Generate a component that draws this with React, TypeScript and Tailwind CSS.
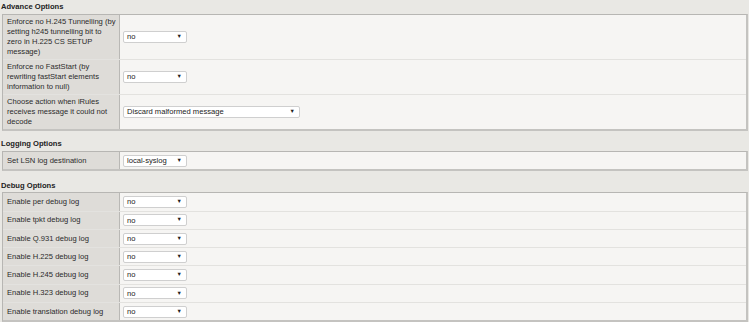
import React from "react";

const font = { fontFamily: '"Liberation Sans", Arial, sans-serif' };

function Select({ value, wide }: { value: string; wide?: boolean }) {
  return (
    <div
      className={`flex h-[12px] items-center justify-between rounded-[2px] border border-[#cfcfcf] bg-white pl-[3px] pr-[4px] text-[7.6px] text-[#222] ${
        wide ? "w-[177px]" : "w-[64px]"
      }`}
    >
      <span>{value}</span>
      <span className="text-[5.5px] leading-none">▼</span>
    </div>
  );
}

function Row({
  label,
  value,
  wide,
  multi,
  last,
}: {
  label: React.ReactNode;
  value: string;
  wide?: boolean;
  multi?: boolean;
  last?: boolean;
}) {
  return (
    <div className={`flex ${last ? "" : "border-b border-[#e3e2df]"}`}>
      <div
        className={`flex w-[117px] shrink-0 items-center whitespace-nowrap border-r border-[#b9b8b5] bg-[#dedcd8] pl-[4px] text-[7.6px] leading-[10px] text-[#2b2b2b] ${
          multi ? "py-[2px]" : "h-[17.3px]"
        }`}
      >
        <div>{label}</div>
      </div>
      <div className="flex flex-1 items-center bg-[#f6f5f3] pl-[3px]">
        <Select value={value} wide={wide} />
      </div>
    </div>
  );
}

function Header({ children }: { children: React.ReactNode }) {
  return (
    <div className="flex h-[14px] items-center pl-[1px] text-[7.6px] font-bold text-[#222]">
      {children}
    </div>
  );
}

function Table({ children }: { children: React.ReactNode }) {
  return (
    <div className="ml-[2px] mr-[1px] border border-b-2 border-r-2 border-[#b7b6b3] border-r-[#c4c3c0] border-b-[#c4c3c0]">
      {children}
    </div>
  );
}

export default function App() {
  return (
    <div className="h-[322px] w-[749px] overflow-hidden bg-[#e9e8e4]" style={font}>
      <Header>Advance Options</Header>
      <Table>
        <Row
          multi
          label={
            <>
              Enforce no H.245 Tunnelling (by
              <br />
              setting h245 tunnelling bit to
              <br />
              zero in H.225 CS SETUP
              <br />
              message)
            </>
          }
          value="no"
        />
        <Row
          multi
          label={
            <>
              Enforce no FastStart (by
              <br />
              rewriting fastStart elements
              <br />
              information to null)
            </>
          }
          value="no"
        />
        <Row
          multi
          last
          wide
          label={
            <>
              Choose action when iRules
              <br />
              receives message it could not
              <br />
              decode
            </>
          }
          value="Discard malformed message"
        />
      </Table>
      <div className="mt-[6px]">
        <Header>Logging Options</Header>
        <Table>
          <Row last label="Set LSN log destination" value="local-syslog" />
        </Table>
      </div>
      <div className="mt-[7px]">
        <Header>Debug Options</Header>
        <Table>
          <Row label="Enable per debug log" value="no" />
          <Row label="Enable tpkt debug log" value="no" />
          <Row label="Enable Q.931 debug log" value="no" />
          <Row label="Enable H.225 debug log" value="no" />
          <Row label="Enable H.245 debug log" value="no" />
          <Row label="Enable H.323 debug log" value="no" />
          <Row last label="Enable translation debug log" value="no" />
        </Table>
      </div>
    </div>
  );
}
